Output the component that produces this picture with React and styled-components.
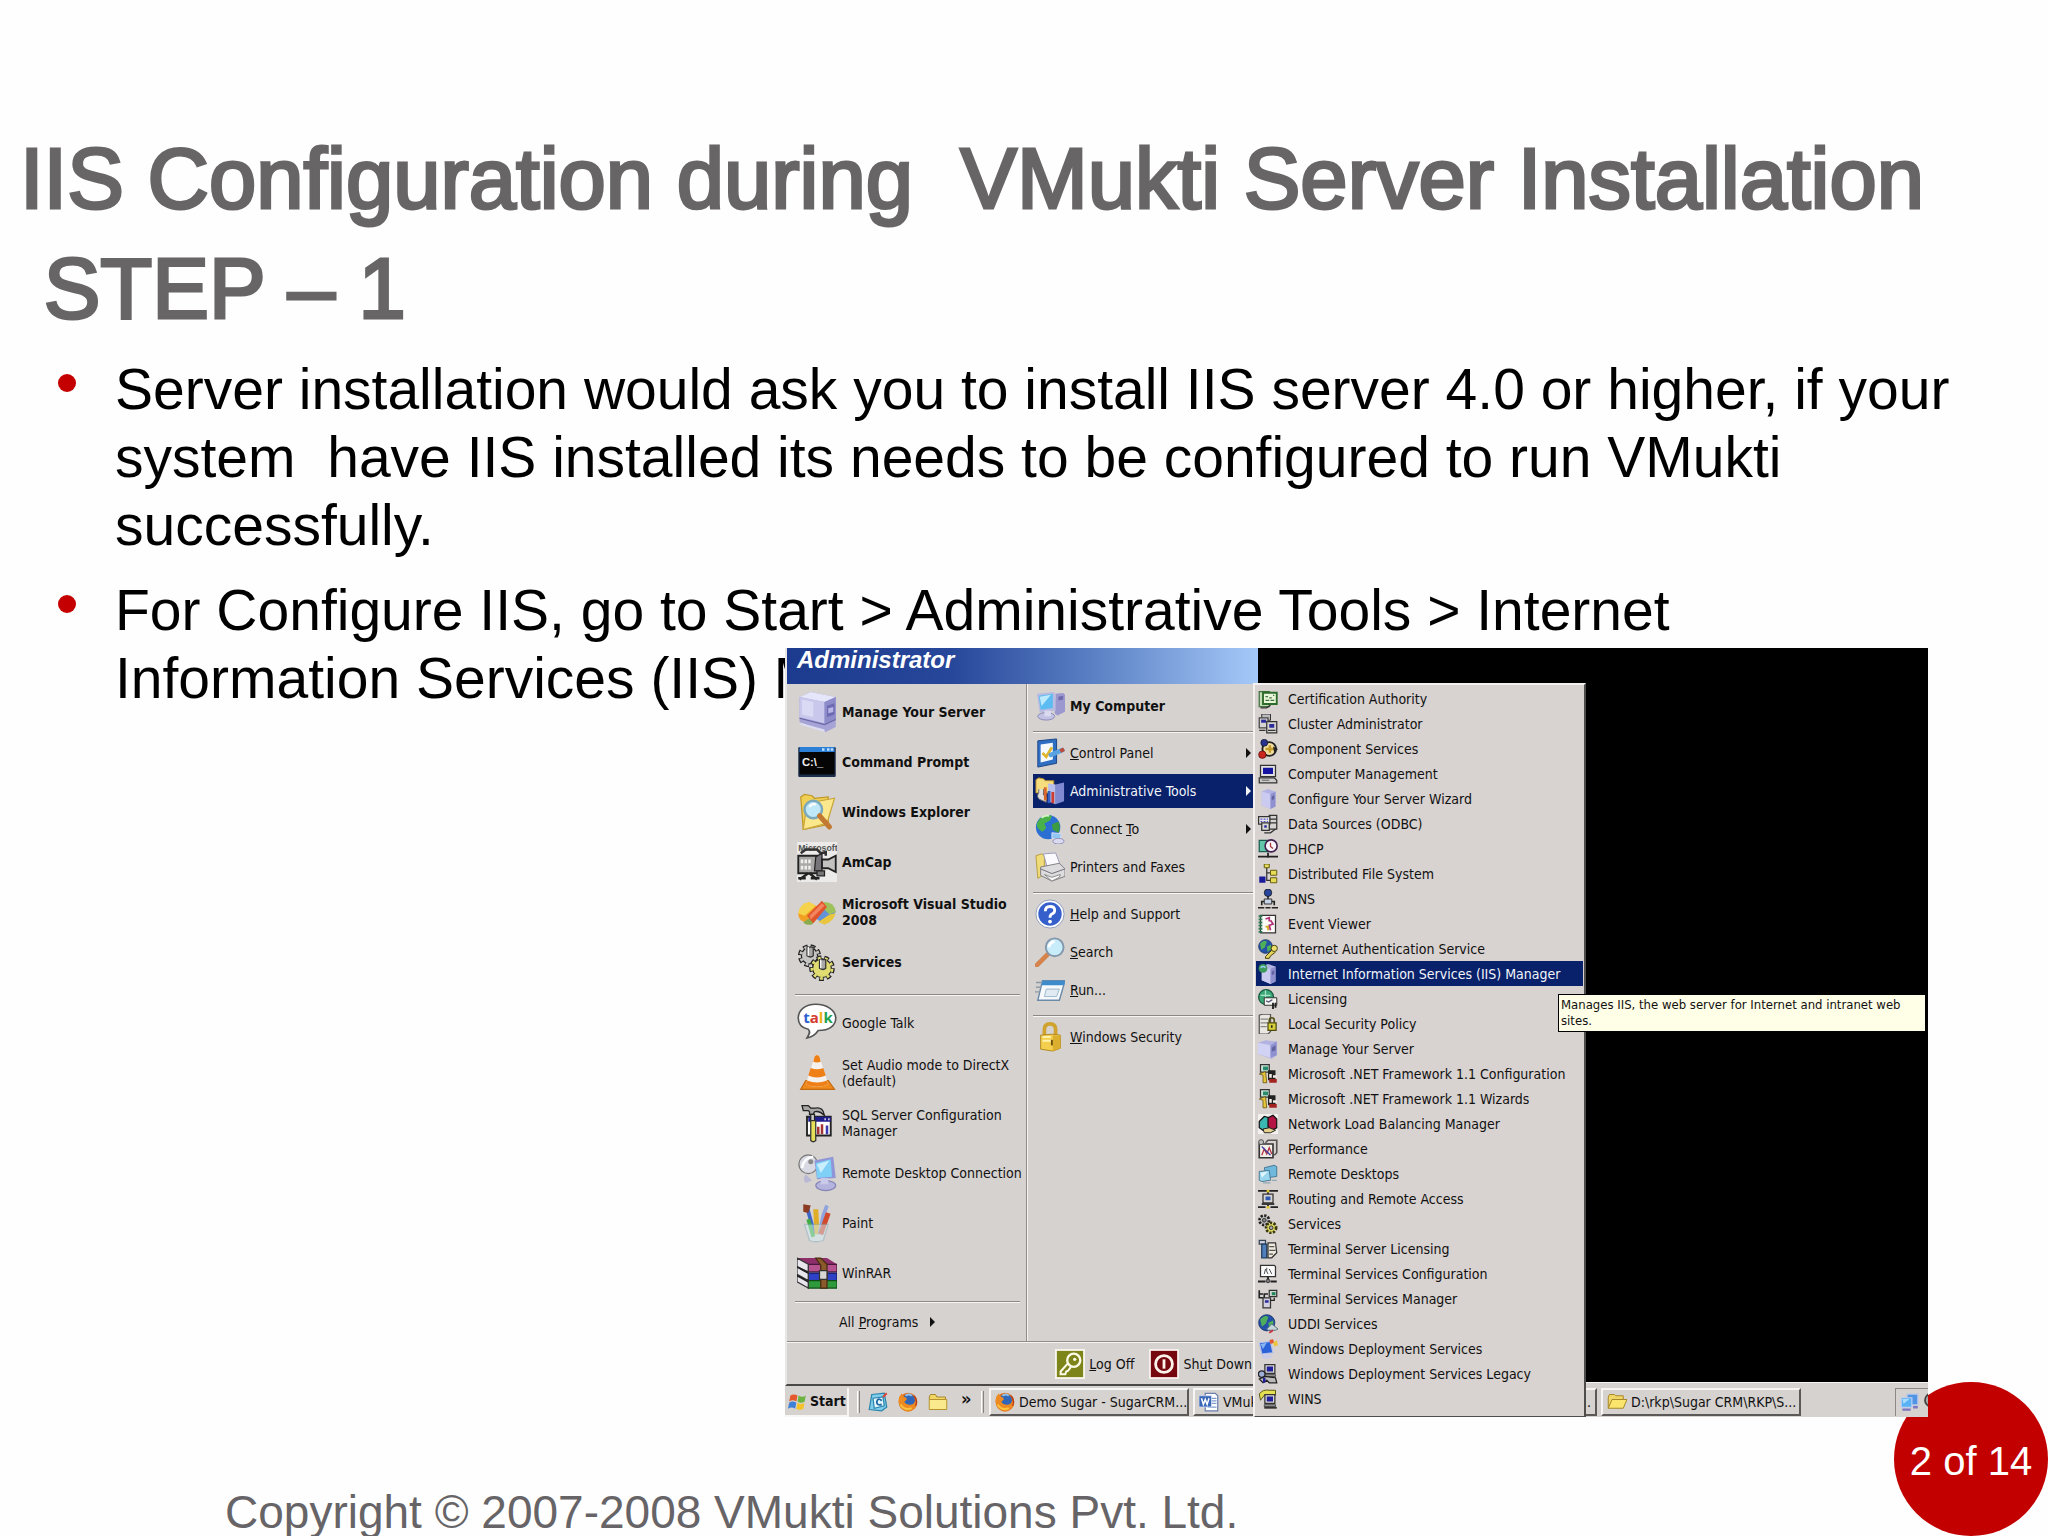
import styled, { createGlobalStyle, css } from "styled-components"

const GlobalStyle = createGlobalStyle`
    * {
        box-sizing: border-box;
    }

    body {
        margin: 0;
        background: #fefefe;
        font-family: "Liberation Sans", Arial, sans-serif;
    }

    button {
        margin: 0;
        padding: 0;
        border: 0;
        background: none;
        color: inherit;
        font: inherit;
        text-align: left;
    }
`

const Slide = styled.main`
    position: relative;
    min-height: 100vh;
    padding-top: 124px;
    overflow: hidden;
`

const Title = styled.h1`
    margin: 0 20px 11px;
    color: #686566;
    font-size: 85px;
    font-weight: 400;
    line-height: 110px;
    white-space: pre-wrap;
    -webkit-text-stroke: 3px #686566;
`

const Points = styled.ul`
    display: flex;
    flex-direction: column;
    gap: 17px;
    margin: 0;
    padding: 0 88px 0 58px;
    list-style: none;
`

const Point = styled.li`
    display: flex;
    gap: 39px;
    color: #000;
    font-size: 57px;
    line-height: 68px;
    white-space: pre-wrap;

    &::before {
        content: "";
        flex: none;
        width: 18px;
        height: 18px;
        margin-top: 19px;
        border-radius: 50%;
        background: #c40000;
    }
`

const Footer = styled.footer`
    margin: 72px 0 0 225px;
    color: #676468;
    font-size: 46px;
    line-height: 46px;
`

const PageBadge = styled.div`
    position: absolute;
    right: 0;
    bottom: 0;
    display: flex;
    align-items: center;
    justify-content: center;
    width: 154px;
    height: 154px;
    padding-top: 4px;
    border-radius: 50%;
    background: #c20000;
    color: #fff;
    font-size: 40px;
`

const Desktop = styled.section`
    position: relative;
    z-index: 1;
    margin: -64px 120px 0 785px;
    overflow: hidden;
    background: #000;
    color: #111;
    font-family: "DejaVu Sans Condensed", "DejaVu Sans", sans-serif;
    font-size: 14px;
    line-height: 16px;
`

const StartMenu = styled.nav`
    position: relative;
    z-index: 1;
    width: 473px;
    border-left: 2px solid #e9e7e5;
    border-bottom: 2px solid #4b4948;
    background: #d6d2cf;
`

const UserName = styled.div`
    height: 36px;
    padding: 0 10px;
    background: linear-gradient(90deg, #1d3b8e 0%, #27479a 35%, #5b80c4 65%, #a5c9f8 100%);
    color: #fff;
    font-family: "Liberation Sans", Arial, sans-serif;
    font-size: 24px;
    font-style: italic;
    font-weight: 700;
    line-height: 24px;
`

const MenuColumns = styled.div`
    display: flex;
    height: 658px;
    border-bottom: 1px solid #8f8c8a;
`

const ProgramColumn = styled.div`
    display: flex;
    flex-direction: column;
    width: 240px;
    padding: 3px 0 0 8px;
    border-right: 1px solid #8f8c8a;

    hr {
        width: 225px;
    }
`

const PlaceColumn = styled.div`
    flex: 1;
    padding: 3px 5px 0 5px;
    border-left: 1px solid #f6f4f2;
`

const PlaceGroup = styled.div`
    display: flex;
    flex-direction: column;
`

const Rule = styled.hr`
    flex: none;
    width: 100%;
    height: 2px;
    margin: ${({ $space }) => $space};
    border: 0;
    border-top: 1px solid #8b8886;
    background: #f8f6f4;
`

const Program = styled.button`
    display: flex;
    align-items: center;
    gap: 5px;
    height: 50px;
    padding-left: 2px;
    font-weight: ${({ $bold }) => ($bold ? 700 : 400)};

    svg {
        flex: none;
        width: 40px;
        height: 40px;
    }
`

const AllPrograms = styled.button`
    display: flex;
    align-items: center;
    gap: 12px;
    height: 38px;
    padding-left: 44px;
`

const Place = styled.button`
    display: flex;
    align-items: center;
    gap: 5px;
    width: 100%;
    height: 34px;
    margin: 2px 0;
    padding: 0 2px;
    font-weight: ${({ $bold }) => ($bold ? 700 : 400)};
    ${({ $active }) => $active && css`
        background: #08216a;
        color: #f2f4fa;
    `}

    svg {
        flex: none;
        width: 30px;
        height: 30px;
    }

    span {
        flex: 1;
    }
`

const Arrow = styled.i`
    width: 0;
    height: 0;
    border: solid transparent;
    border-width: 5px 0 5px 5px;
    border-left-color: currentColor;
`

const SessionBar = styled.div`
    display: flex;
    align-items: center;
    justify-content: flex-end;
    gap: 15px;
    height: 42px;
    padding-right: 6px;
    border-top: 1px solid #f6f4f2;
`

const SessionButton = styled.button`
    display: flex;
    align-items: center;
    gap: 4px;

    svg {
        width: 30px;
        height: 30px;
    }
`

const SubMenu = styled.nav`
    position: absolute;
    top: 35px;
    left: 468px;
    z-index: 2;
    width: 333px;
    padding: 1px 1px 5px;
    border: 2px solid #f4f2f0;
    border-right-color: #4f4d4c;
    border-bottom-color: #4f4d4c;
    background: #d8d3d0;
`

const Tool = styled.button`
    display: flex;
    align-items: center;
    gap: 10px;
    width: 100%;
    height: 25px;
    padding-left: 2px;
    ${({ $active }) => $active && css`
        background: #08216a;
        color: #f2f4fa;
    `}

    svg {
        flex: none;
        width: 20px;
        height: 20px;
    }
`

const Tooltip = styled.div`
    position: absolute;
    top: 346px;
    left: 773px;
    z-index: 3;
    width: 368px;
    padding: 2px;
    border: 1px solid #000;
    background: #fffee6;
    font-size: 13px;
`

const Taskbar = styled.div`
    display: flex;
    align-items: center;
    height: 35px;
    margin-top: -4px;
    padding-top: 4px;
    border-top: 1px solid #f6f4f2;
    background: #d6d2cf;
`

const StartButton = styled.button`
    display: flex;
    align-items: center;
    gap: 3px;
    width: 64px;
    height: 29px;
    padding-left: 3px;
    border-right: 2px solid #f8f6f4;
    border-bottom: 2px solid #f8f6f4;
    font-weight: 700;

    svg {
        width: 19px;
        height: 19px;
    }
`

const Grip = styled.i`
    width: 3px;
    height: 22px;
    margin-left: 8px;
    border-left: 1px solid #fff;
    border-right: 1px solid #85827f;
`

const QuickLaunch = styled.div`
    display: flex;
    align-items: center;
    gap: 10px;
    width: 113px;
    padding-left: 8px;

    svg {
        width: 20px;
        height: 20px;
    }

    button {
        height: 20px;
    }
`

const More = styled.button`
    margin: 0 0 6px 3px;
    font-weight: 700;
    font-size: 18px;
`

const Tasks = styled.div`
    display: flex;
    gap: 4px;
    margin: 0 94px 0 5px;
`

const TaskButton = styled.button`
    display: flex;
    align-items: center;
    gap: 4px;
    width: 200px;
    height: 28px;
    padding: 0 4px;
    border: 2px solid #f8f6f4;
    border-right-color: #5b5957;
    border-bottom-color: #5b5957;
    white-space: nowrap;

    svg {
        flex: none;
        width: 20px;
        height: 20px;
    }

    span {
        flex: 1;
        text-align: ${({ $end }) => ($end ? "right" : "left")};
    }
`

const Tray = styled.div`
    display: flex;
    align-items: center;
    flex: 1;
    gap: 3px;
    height: 28px;
    padding-left: 4px;
    overflow: hidden;
    border-top: 1px solid #8b8886;
    border-left: 1px solid #8b8886;

    svg {
        flex: none;
        width: 19px;
        height: 19px;
    }
`

// "&" marks the letter that is underlined as the access key
function Label({ children }) {
    const [before, after] = children.split("&")
    if (after === undefined) return <span>{children}</span>
    return <span>{before}<u>{after[0]}</u>{after.slice(1)}</span>
}

const Big = ({ children }) => <svg viewBox="0 0 32 32" aria-hidden="true">{children}</svg>
const Small = ({ children }) => <svg viewBox="0 0 16 16" aria-hidden="true">{children}</svg>

/* ---- large icons ---- */

const ServerIcon = () => (
    <Big>
        <path d="M2 4 11 0l20 4v24l-8 4L2 24z" fill="#a6a3d6" />
        <path d="M2 4 11 0l20 4-9 4z" fill="#e6e6fb" />
        <path d="M2 4l20 4v17L2 20z" fill="#c9c8ec" />
        <path d="M4 6l9 2v12l-9-2z" fill="#dfdff6" opacity=".8" />
        <path d="M22 8l9-4v18l-9 3z" fill="#8d8bc9" />
        <path d="M24 11l6-2v9l-6 2z" fill="#6c6ab2" />
        <path d="M25 13l4-1v4l-4 1z" fill="#b7b6e6" />
        <path d="M2 21l20 5 9-4" fill="none" stroke="#6866a5" />
        <path d="M4 25l18 5v2L2 26z" fill="#dcdcf3" />
    </Big>
)

const PromptIcon = () => (
    <Big>
        <rect x="1" y="4" width="30" height="24" rx="1" fill="#1c2e4d" />
        <rect x="2" y="4" width="28" height="4" fill="#2b7fd6" />
        <path d="M20 6h2m2 0h2m1 0h2" stroke="#bfe0ff" strokeWidth="2" />
        <rect x="2" y="8" width="28" height="18" fill="#050505" />
        <text x="4" y="19" fill="#eee" fontSize="9" fontWeight="700" fontFamily="Liberation Sans, sans-serif">C:\_</text>
    </Big>
)

const ExplorerIcon = () => (
    <Big>
        <path d="M3 4l3-2 6 1 2 2 11-1v22L5 30z" fill="#f0cf55" stroke="#c09a28" />
        <path d="M8 9l22-4-6 20-19 5z" fill="#fbe88c" stroke="#c9a53a" />
        <circle cx="13" cy="14" r="7" fill="#bfe8f8" stroke="#7da9bd" strokeWidth="2" />
        <path d="M10 12a4 4 0 0 1 5-2" stroke="#fff" strokeWidth="2" fill="none" />
        <path d="M18 19l8 9" stroke="#c27a33" strokeWidth="4" strokeLinecap="round" />
    </Big>
)

const CameraIcon = () => (
    <Big>
        <path d="M0 0h32v32H0z" fill="#ecebea" />
        <text x="1" y="7" fill="#555" fontSize="7" fontFamily="Liberation Sans, sans-serif">Microsoft</text>
        <path d="M3 9l4-3h9l3 3 4-1v3" fill="none" stroke="#333" strokeWidth="2" />
        <path d="M1 11h18v14H1z" fill="#aaa8a6" stroke="#222" strokeWidth="1.5" />
        <path d="M4 14v8m3-8v8m3-8v8" stroke="#eee" strokeDasharray="3 2" strokeWidth="2" />
        <path d="M15 12l5-3v14h-6z" fill="#77757a" stroke="#222" />
        <path d="M20 14h5l6-3v13l-6-3h-5z" fill="#c4c2c0" stroke="#222" strokeWidth="1.5" />
        <path d="M9 25l-7 5m8-5 6 5M1 29h6M11 29h7" stroke="#222" strokeWidth="2" />
        <path d="M16 23h6v4h-6z" fill="#777" stroke="#222" />
    </Big>
)

const VisualStudioIcon = () => (
    <Big>
        <path d="M1 17 9 8l8 4-9 12q-7 0-7-7z" fill="#f2a024" />
        <path d="M1 17q1-8 9-9l5 3-9 8z" fill="#f5d34b" />
        <path d="M5 24l5-3 7-1-5 6q-5 1-7-2z" fill="#8cab4d" />
        <path d="M17 11q10-6 14 5l-9 10-7-5z" fill="#6293d8" />
        <path d="M22 8q8 0 9 8l-5 2-7-7z" fill="#9dc25c" />
        <path d="M17 24l5 2q7-2 9-9l-5 1z" fill="#e9c63e" />
        <path d="M8 19 20 7l4 5-11 13z" fill="#e2542b" />
        <path d="M10 19 20 9l2 2-11 11z" fill="#f2855e" />
    </Big>
)

const Cog = ({ x, y, r, fill }) => (
    <g>
        <circle cx={x} cy={y} r={r} fill="none" stroke="#222" strokeWidth="4.5" strokeDasharray="3.4 2.2" />
        <circle cx={x} cy={y} r={r - 0.5} fill={fill} stroke="#222" />
        <circle cx={x} cy={y} r={r} fill="none" stroke={fill} strokeWidth="2.4" strokeDasharray="2.2 3.4" strokeDashoffset="-.6" />
        <path d={`M${x - 2} ${y}v-7h5v7q-2 2-5 0z`} fill="#aaa8a6" stroke="#333" />
        <path d={`M${x - 1} ${y - 7}v7`} stroke="#fff" />
    </g>
)

const GearsIcon = () => (
    <Big>
        <Cog x={10} y={11} r={7} fill="#c7c5c3" />
        <Cog x={20} y={21} r={8} fill="#e1dc72" />
    </Big>
)

const TalkIcon = () => (
    <Big>
        <path d="M15 1C6 1 1 6 1 12c0 5 3 8 8 9 2 2 1 4-1 7 5-1 7-3 9-6 9 0 14-4 14-10S24 1 15 1z" fill="#fff" stroke="#555" strokeWidth="1.3" />
        <text x="5" y="16" fontSize="12" fontWeight="700" fontFamily="Open Sans, sans-serif">
            <tspan fill="#2d5fd0">t</tspan>
            <tspan fill="#d63a2f">a</tspan>
            <tspan fill="#eeb211">l</tspan>
            <tspan fill="#1fa14b">k</tspan>
        </text>
    </Big>
)

const ConeIcon = () => (
    <Big>
        <path d="M3 29l4-7h18l5 7z" fill="#f08a1c" stroke="#c46a10" />
        <path d="M14 3q2-3 4 0l7 22q-9 4-18 0z" fill="#f4f1ee" />
        <path d="M14 3q2-3 4 0l1 4q-3 1-6 0zM11 12q5 2 10 0l2 6q-7 3-14 0z" fill="#ef7f17" />
        <path d="M7 25q9 4 18 0l-1-3q-8 3-16 0z" fill="#ef7f17" />
    </Big>
)

const SqlIcon = () => (
    <Big>
        <path d="M8 11h19v15H8z" fill="#fff" stroke="#222" strokeWidth="1.5" />
        <path d="M9 11h18v4H9z" fill="#221d8c" />
        <path d="M22 13h1m2 0h1" stroke="#fff" strokeWidth="1.5" />
        <path d="M17 25v-6m3 6v-8" stroke="#a33434" strokeWidth="2" />
        <path d="M24 25v-7" stroke="#3a3ab0" strokeWidth="2" />
        <path d="M4 2h5l2 2h4q6-1 7 6-4-4-8-3l-1 2h-3V7L9 6H5z" fill="#a9a7a5" stroke="#222" />
        <path d="M11 9h3v5h-3z" fill="#ccc" stroke="#222" />
        <path d="M11 14h4v16q-2 2-4 0z" fill="#e6e158" stroke="#333" />
    </Big>
)

const RemoteIcon = () => (
    <Big>
        <circle cx="9" cy="9" r="7.5" fill="#d9d9e4" stroke="#777" />
        <path d="M4 12q1-8 9-9" stroke="#fff" strokeWidth="2" fill="none" />
        <circle cx="11" cy="7" r="2" fill="#888" />
        <path d="M7 17l5 5-5 2q-3-3 0-7z" fill="#b9b9d6" />
        <path d="M14 6l15-3 2 17-15 1z" fill="#8f95d6" />
        <path d="M15 8l12-3 1 14-12 1z" fill="#7fd0f7" />
        <path d="M16 9l10-3-7 10z" fill="#c9effd" />
        <ellipse cx="23" cy="26" rx="8" ry="4" fill="#b4b4de" stroke="#8484b5" />
        <path d="M19 20h6v5h-6z" fill="#c9c9ea" />
    </Big>
)

const PaintIcon = () => (
    <Big>
        <path d="M8 3l6 22" stroke="#3f66c9" strokeWidth="3" />
        <path d="M5 1l6 1-2 6-4-1z" fill="#8b3c22" />
        <path d="M15 5l1 20" stroke="#e0ad28" strokeWidth="4" />
        <path d="M24 2l-3 8-3 15" stroke="#8fa4dd" strokeWidth="3" fill="none" />
        <path d="M25 8l-6 17" stroke="#d2482b" strokeWidth="4" />
        <path d="M9 13l4 14" stroke="#3eac3e" strokeWidth="3" />
        <path d="M6 17h19l-4 13q-6 2-11 0z" fill="#d4eef6" opacity=".5" stroke="#8cb3c0" />
    </Big>
)

const RarIcon = () => (
    <Big>
        <path d="M0 4h24l8 5v3H9z" fill="#8e2f6b" />
        <path d="M9 9h23v6H9z" fill="#b5528f" stroke="#4a153a" />
        <path d="M9 16h23v6H9z" fill="#2d40c6" stroke="#131b63" />
        <path d="M9 22h23v6H9z" fill="#2f9a3b" stroke="#0f4d18" />
        <path d="M0 4l9 5v6l-9-4zM0 11l9 5v6l-9-5zM0 18l9 4v6l-9-5z" fill="#e9e6ee" stroke="#333" />
        <path d="M0 11l9 5M0 18l9 5" stroke="#222" strokeWidth="1.5" />
        <path d="M15 4h4l5 5v19h-5V10z" fill="#8b5a2b" stroke="#4a2c10" />
        <path d="M18 14h6v7h-6z" fill="#d8d6d4" stroke="#333" />
    </Big>
)

const ComputerIcon = () => (
    <Big>
        <path d="M22 3l8-1 2 2v18l-8 4-3-2z" fill="#9b98cf" />
        <path d="M25 6l5-1v4l-5 1z" fill="#6d6aad" />
        <path d="M2 3l17-2 3 2v18L5 23z" fill="#b9bbe0" />
        <path d="M4 5l15-2v15L6 20z" fill="#5cbcf2" />
        <path d="M5 6l12-2L7 16z" fill="#bdeafd" />
        <ellipse cx="12" cy="27" rx="9" ry="4" fill="#c2c3e2" stroke="#8788b8" />
        <path d="M10 21h7v6h-7z" fill="#d9daf0" />
    </Big>
)

const ControlPanelIcon = () => (
    <Big>
        <path d="M3 3l20-2v26L3 31z" fill="#2e6fc4" stroke="#1b4280" />
        <path d="M6 7l13-2v18L6 26z" fill="#f7fafd" />
        <path d="M8 16l4 4 6-10" stroke="#dfb62c" strokeWidth="3" fill="none" />
        <path d="M17 18l12-5" stroke="#5aa3e0" strokeWidth="5" strokeLinecap="round" />
        <path d="M27 14l4-2" stroke="#c04a3a" strokeWidth="4" />
    </Big>
)

const AdminToolsIcon = () => (
    <Big>
        <path d="M1 4l3-2 5 1 2 2h9v13H1z" fill="#f5dc7d" stroke="#b98f2b" />
        <path d="M22 9l9-2v20l-9 3z" fill="#7f8ad2" />
        <path d="M14 8l8 1v21l-8-3z" fill="#b9bfec" />
        <path d="M4 14v4q-3 4 1 7l7 3v-5l-3-3v-6" fill="#e0e0e0" stroke="#666" />
        <path d="M11 12v14" stroke="#d8672c" strokeWidth="3" />
        <path d="M15 16v13" stroke="#3560c0" strokeWidth="3" />
        <path d="M19 17v12" stroke="#cc3c33" strokeWidth="3" />
    </Big>
)

const ConnectIcon = () => (
    <Big>
        <circle cx="14" cy="14" r="13" fill="#2b6fd3" />
        <path d="M5 5q7-5 13-3l-2 5-6 3 2 5-4 4q-7-4-6-9z" fill="#49b14a" />
        <path d="M18 11l7-3q3 6 0 12l-6-3z" fill="#3c9a40" />
        <path d="M7 4q4-3 8-2" stroke="#d8f3c4" strokeWidth="2" fill="none" />
        <path d="M18 20l10 1-1 6-9-1z" fill="#8fc7f2" stroke="#dcdcf4" />
        <ellipse cx="25" cy="29" rx="6" ry="3" fill="#dadaee" stroke="#8c8cb9" />
    </Big>
)

const PrinterIcon = () => (
    <Big>
        <path d="M1 4l6-2 3 2v20l-7 4z" fill="#efdc78" stroke="#b69c3e" />
        <path d="M9 2l13-1 5 13-14 2z" fill="#fafaff" stroke="#9a9abb" />
        <path d="M6 16l20-4 6 6v8l-14 5-12-6z" fill="#dcdbdd" stroke="#7d7b80" />
        <path d="M6 18l12 5 14-5" fill="none" stroke="#6d6b70" />
        <path d="M10 24l8 3 9-3-1 3-8 4z" fill="#f9f9f9" stroke="#888" />
    </Big>
)

const HelpIcon = () => (
    <Big>
        <circle cx="16" cy="16" r="15" fill="#fff" stroke="#8b99b8" />
        <circle cx="16" cy="16" r="12.5" fill="#3560cc" />
        <path d="M11 13q0-5 5-5t5 4q0 3-3 4-2 1-2 4" fill="none" stroke="#fff" strokeWidth="3" />
        <circle cx="16" cy="24" r="2" fill="#fff" />
    </Big>
)

const SearchIcon = () => (
    <Big>
        <path d="M2 30l11-11" stroke="#d3834b" strokeWidth="5" strokeLinecap="round" />
        <circle cx="21" cy="11" r="9.5" fill="#c9ecfa" stroke="#8297ad" strokeWidth="2" />
        <path d="M15 11a6 6 0 0 1 6-6" stroke="#fff" strokeWidth="3" fill="none" />
    </Big>
)

const RunIcon = () => (
    <Big>
        <path d="M8 6h24l-6 21H3z" fill="#f6fafd" stroke="#6b8aa9" strokeWidth="1.5" />
        <path d="M8 6h24l-1 5H7z" fill="#3f8ccc" />
        <path d="M12 15h14l-3 8H10z" fill="#dfeaf2" stroke="#9db6c8" />
        <path d="M1 8h6M1 13h5M0 18h5" stroke="#8d9aa6" strokeWidth="1.5" />
    </Big>
)

const LockIcon = () => (
    <Big>
        <path d="M10 14V8q0-6 6-6t6 6v6" fill="none" stroke="#cfa32d" strokeWidth="4" />
        <path d="M6 14l13-1 8 1v14l-8 3-13-2z" fill="#f4cf4d" stroke="#af861f" />
        <path d="M19 14l8 1v13l-8 3z" fill="#dcae2d" />
        <path d="M8 16h9M8 20h9" stroke="#fff2a9" strokeWidth="2" />
        <path d="M18 19v6" stroke="#6d4f0e" strokeWidth="2" />
    </Big>
)

const LogOffIcon = () => (
    <Big>
        <rect x="1" y="1" width="30" height="30" fill="#7d8419" stroke="#f7f6ee" strokeWidth="2" />
        <circle cx="20" cy="12" r="7" fill="none" stroke="#fbfae6" strokeWidth="2.5" />
        <circle cx="21" cy="11" r="1.8" fill="#fbfae6" />
        <path d="M14 15l-8 9v3h5l1-3 2-1 3-4" fill="none" stroke="#fbfae6" strokeWidth="2.2" />
    </Big>
)

const ShutDownIcon = () => (
    <Big>
        <rect x="1" y="1" width="30" height="30" fill="#77070f" stroke="#f7f0ee" strokeWidth="2" />
        <circle cx="16" cy="16" r="9" fill="none" stroke="#fbf2e9" strokeWidth="3" />
        <path d="M16 11v10" stroke="#fbf2e9" strokeWidth="3" />
    </Big>
)

/* ---- small icons ---- */

const Pc = ({ x = 0, y = 0, screen = "#20209c" }) => (
    <g transform={`translate(${x} ${y})`}>
        <path d="M.5.5h8v7h-8z" fill="#d9d7d5" stroke="#333" />
        <path d="M2 2h5v4H2z" fill={screen} />
        <path d="M0 8.500h9v1.500H0z" fill="#999" stroke="#333" strokeWidth=".6" />
    </g>
)

const Globe = ({ x = 7, y = 7, r = 6 }) => (
    <g>
        <circle cx={x} cy={y} r={r} fill="#2450a8" stroke="#163063" strokeWidth=".6" />
        <path d={`M${x - r * .8} ${y - r * .4}q${r * .6} ${-r * .7} ${r} ${-r * .3}l${-r * .3} ${r * .8}-${r * .5} ${r * .4}z`} fill="#4fae5a" />
        <path d={`M${x + r * .2} ${y}l${r * .6}-${r * .3} 0 ${r * .7}-${r * .5} ${r * .4}z`} fill="#4fae5a" />
    </g>
)

const Tower = () => (
    <>
        <path d="M3 2l5-2 6 2v12l-4 2-7-3z" fill="#b3b3e3" />
        <path d="M3 2l7 2v12l-7-3z" fill="#cbcbf2" />
        <path d="M10 4l4-2v12l-4 2z" fill="#8f90cf" />
        <path d="M11 6l2-1v3l-2 1z" fill="#62639f" />
    </>
)

const Key = () => (
    <>
        <path d="M12 8l-6 6v1.500h3l1-2 4-3" fill="#e3d45c" stroke="#4a4210" strokeWidth=".8" />
        <circle cx="13" cy="7.500" r="2.500" fill="#ecdf6c" stroke="#4a4210" strokeWidth=".8" />
    </>
)

const CertIcon = () => (
    <Small>
        <path d="M1 2h8v12H1z" fill="#c3dcb8" stroke="#41713c" />
        <path d="M4 3h11v9H4z" fill="#e8f5d8" stroke="#2d6b2a" strokeWidth="1.5" />
        <path d="M6 6h2m1 1h2m1-2h1M6 9h3m1 0h3" stroke="#41713c" />
        <path d="M2 15h5l3-2" stroke="#333" fill="none" />
    </Small>
)

const ClusterIcon = () => (
    <Small>
        <path d="M3 0h7v5H3z" fill="#bbb" stroke="#333" strokeWidth=".8" />
        <path d="M1 3h7v8H1z" fill="#d6d4d2" stroke="#444" />
        <path d="M2.500 4.500h4V7h-4z" fill="#2b2b9c" />
        <path d="M7 6h8v9H7z" fill="#d6d4d2" stroke="#333" />
        <path d="M9 8h4v3H9z" fill="#2b2b9c" />
        <path d="M1 13h5M8 13h6" stroke="#333" />
    </Small>
)

const ComponentIcon = () => (
    <Small>
        <circle cx="9" cy="8" r="5.500" fill="#f1dfa2" stroke="#222" strokeWidth="1.500" />
        <path d="M6 8h7M9.500 5v6" stroke="#c59b2b" strokeWidth="2" />
        <circle cx="5" cy="3" r="2.800" fill="#27338f" stroke="#111" strokeWidth=".5" />
        <circle cx="3.500" cy="12.500" r="3" fill="#c8251c" stroke="#400" strokeWidth=".5" />
        <path d="M12 6l4 2-3 3z" fill="#222" />
    </Small>
)

const ManagementIcon = () => (
    <Small>
        <path d="M2 1h12v9H2z" fill="#e3e1df" stroke="#333" />
        <path d="M4 3h8v5H4z" fill="#1414a0" />
        <path d="M1 11h12l2 2v2H1z" fill="#cfcdca" stroke="#333" />
        <path d="M3 13h6" stroke="#777" />
    </Small>
)

const TowerIcon = () => <Small><Tower /></Small>

const ServerBoxIcon = () => (
    <Small>
        <path d="M0 3l6-2 9 1v11l-4 3-11-4z" fill="#b3b3e3" />
        <path d="M0 3l10 2v10L0 12z" fill="#d2d2f4" />
        <path d="M10 5l5-3v11l-5 2z" fill="#8f90cf" />
        <path d="M11 7l3-2v4l-3 1z" fill="#62639f" />
    </Small>
)

const OdbcIcon = () => (
    <Small>
        <path d="M9 1h6v11H9z" fill="#d6d4d2" stroke="#333" />
        <path d="M9 4h6M9 7h6" stroke="#333" />
        <path d="M.500 2h9v6h-9z" fill="#e9e7e5" stroke="#333" />
        <path d="M2 4h6M2 6h6" stroke="#55c" strokeDasharray="1.500 1" />
        <path d="M3 7h6v6H3z" fill="#dcdad8" stroke="#333" />
        <path d="M5 9h2v2H5z" fill="#2b2b9c" />
        <path d="M5 15h5l4-3" stroke="#333" fill="none" />
    </Small>
)

const DhcpIcon = () => (
    <Small>
        <path d="M1 1h7v9H1z" fill="#61c7a8" stroke="#1b5c51" />
        <circle cx="10.500" cy="5.500" r="4.800" fill="#f8f4fb" stroke="#43204f" strokeWidth="1.300" />
        <path d="M10 3v3l2 1.500" stroke="#a33" fill="none" />
        <path d="M0 14h16M8 11v4" stroke="#222" strokeWidth="1.400" />
    </Small>
)

const DfsIcon = () => (
    <Small>
        <path d="M7 3v10h4M7 7h4" fill="none" stroke="#333" />
        <path d="M5 0h4v3H5zM10 5h5v4h-5zM10 11h5v4h-5z" fill="#e6dc55" stroke="#665d14" strokeWidth=".8" />
        <path d="M1 10h5v5H1z" fill="#1a1a9a" />
    </Small>
)

const DnsIcon = () => (
    <Small>
        <path d="M8 5v4M3 13v-3h10v3M0 15h5m1 0h4m1 0h5" fill="none" stroke="#222" strokeWidth="1.300" />
        <path d="M5 8h6v4H5z" fill="#c9d3e8" stroke="#333" strokeWidth=".8" />
        <circle cx="8" cy="3" r="3" fill="#27459c" stroke="#111" strokeWidth=".6" />
    </Small>
)

const EventIcon = () => (
    <Small>
        <path d="M2 1h12v14H2z" fill="#fbfbf9" stroke="#333" />
        <path d="M2 1v14" stroke="#2c7a53" strokeWidth="3" strokeDasharray="1.500 1" />
        <path d="M6 4l3-1v3M10 5l2 3-3 1 1 4" stroke="#b0307a" strokeWidth="1.400" fill="none" />
        <path d="M6 10h2v3" stroke="#d0a81d" strokeWidth="1.400" fill="none" />
    </Small>
)

const AuthIcon = () => <Small><Globe x={6} y={6} r={5.5} /><Key /></Small>

const IisIcon = () => <Small><Tower /><circle cx="4" cy="3.500" r="3.500" fill="#3e9a5b" /><path d="M2 3q2-2 4 0" stroke="#9ed0f7" fill="none" /></Small>

const LicenseIcon = () => (
    <Small>
        <circle cx="6.500" cy="6.500" r="6" fill="#3ba876" stroke="#17573f" />
        <path d="M2 5h8M6 1v10" stroke="#a8e2c6" />
        <path d="M5 7h10v6H5z" fill="#f6f6f3" stroke="#333" strokeWidth=".8" />
        <path d="M6.500 9.500l2 1 3-2" stroke="#557" fill="none" />
        <path d="M12 11v5m2-5v4" stroke="#222" strokeWidth="1.500" />
    </Small>
)

const PolicyIcon = () => (
    <Small>
        <path d="M1 1l3-1h6v14l-2 2H1z" fill="#e9e7e0" stroke="#555" />
        <path d="M2 4h6M2 7h6M2 10h5" stroke="#888" />
        <path d="M9 7V5q0-2 2-2t2 2v2" fill="none" stroke="#555016" strokeWidth="1.300" />
        <path d="M8 7h6.500v6H8z" fill="#d8d137" stroke="#4d4a10" />
        <path d="M11 9v2" stroke="#222" strokeWidth="1.300" />
    </Small>
)

const NetIcon = () => (
    <Small>
        <path d="M2 .500h7v6H2z" fill="#cfe5dc" stroke="#333" />
        <path d="M4 2h4v3H4z" fill="#2a8a6c" />
        <path d="M1 8l5-2 1 9H4V9z" fill="#e8c53b" stroke="#5e4d0c" strokeWidth=".6" />
        <path d="M8 5h6v8H8z" fill="#222" />
        <path d="M9 8h2v3H9zM12 9h3v2h-3z" fill="#f4ece6" />
        <path d="M9 12h6v3H9z" fill="#a2231f" />
    </Small>
)

const BalanceIcon = () => (
    <Small>
        <path d="M0 0h16v16H0z" fill="#f3f1ef" />
        <path d="M1 6l4-4 4 1v8l-5 2-3-2z" fill="#3ab7b0" stroke="#111" />
        <path d="M8 3l4-2 3 3v7l-4 2-3-3z" fill="#b31443" stroke="#111" />
        <path d="M4 12l5-1 5 2-4 2H5z" fill="#e6d08d" stroke="#222" strokeWidth=".8" />
    </Small>
)

const PerformanceIcon = () => (
    <Small>
        <path d="M1 4h11v11H1z" fill="#f3efe9" stroke="#333" strokeWidth="1.300" />
        <path d="M3 13l2-5 2 4 2-5 2 5" stroke="#b0303c" fill="none" />
        <path d="M3 6l7 7" stroke="#3a3aa0" />
        <path d="M6 3l2-2h7v10l-2 2" fill="none" stroke="#555" strokeWidth="1.300" />
        <circle cx="2.500" cy="2.500" r="2" fill="#bbb" stroke="#444" strokeWidth=".7" />
    </Small>
)

const DesktopsIcon = () => (
    <Small>
        <path d="M5 3l8-2 2 1v8l-8 1z" fill="#6fb9dd" stroke="#3d708c" strokeWidth=".7" />
        <path d="M1 6l8-1 1 8-7 1-2-1z" fill="#9ad7ee" stroke="#3d708c" strokeWidth=".7" />
        <path d="M2 7l6-1-5 5z" fill="#e0f5fc" />
        <path d="M4 15h6M11 13h4" stroke="#8fa9b5" />
    </Small>
)

const RoutingIcon = () => (
    <Small>
        <path d="M0 1.500h16M0 14.500h6m4 0h6M8 1v3M8 12v3" stroke="#222" strokeWidth="1.400" />
        <path d="M4 4h8v7H4z" fill="#d8d6d4" stroke="#333" />
        <path d="M6 6h4v3H6z" fill="#2f58b0" />
        <path d="M3 12h10" stroke="#333" strokeWidth="1.500" />
        <circle cx="8" cy="1.500" r="1.200" fill="#e1c72c" />
        <circle cx="8" cy="14.500" r="1.200" fill="#e1c72c" />
    </Small>
)

const SmallGearsIcon = () => (
    <Small>
        <circle cx="5" cy="5" r="3.800" fill="#c7c5c3" stroke="#222" strokeWidth="2.200" strokeDasharray="1.800 1.100" />
        <circle cx="5" cy="5" r="1.500" fill="#888" stroke="#222" strokeWidth=".7" />
        <circle cx="10.500" cy="11" r="4" fill="#e1dc62" stroke="#3b3810" strokeWidth="2.200" strokeDasharray="1.800 1.100" />
        <circle cx="10.500" cy="11" r="1.500" fill="#aaa" stroke="#222" strokeWidth=".7" />
    </Small>
)

const TsLicenseIcon = () => (
    <Small>
        <path d="M1 1h5v3H1z" fill="#ccd" stroke="#345" />
        <path d="M3 4h4v11H3z" fill="#4f80bd" stroke="#223a5c" />
        <path d="M8 3h6l1 8-4 4H8z" fill="#eee9dd" stroke="#333" />
        <path d="M9 6h4M9 9h5M9 12h3" stroke="#555" />
    </Small>
)

const TsConfigIcon = () => (
    <Small>
        <path d="M2 1h11l1 1v8H2z" fill="#fafafa" stroke="#333" />
        <path d="M5 8l1-4 2 4M9 4l2 4M7 3v2" stroke="#555" fill="none" strokeWidth=".8" />
        <path d="M8 10v4M0 14h6m4 0h5" stroke="#222" strokeWidth="1.500" />
        <circle cx="8" cy="13.500" r="1.500" fill="#777" stroke="#222" strokeWidth=".6" />
    </Small>
)

const TsManagerIcon = () => (
    <Small>
        <path d="M1 1v6h4V4h3M1 4h3" fill="none" stroke="#222" strokeWidth="1.300" />
        <path d="M9 1h6v5H9z" fill="#cfd8d4" stroke="#333" />
        <path d="M11 2.500h3V5h-3z" fill="#23855a" />
        <path d="M4 7h6v8H4z" fill="#d3d1df" stroke="#333" />
        <path d="M5.500 9h3v2h-3z" fill="#2b2b9c" />
        <path d="M10 9h3V7" stroke="#222" fill="none" />
    </Small>
)

const UddiIcon = () => (
    <Small>
        <Globe x={7} y={7} r={6.5} />
        <path d="M7 12l4-4 5 4-2 1H8z" fill="#c5d5da" stroke="#5c7680" strokeWidth=".8" />
        <path d="M9 15l3-2" stroke="#c34" strokeWidth="1.500" />
    </Small>
)

const DeployIcon = () => (
    <Small>
        <path d="M1 3l9-1 2 9-9 1z" fill="#2c62d8" stroke="#b9c3ea" />
        <path d="M2 4l5-1-3 5z" fill="#88b4f2" />
        <path d="M9 1l3-1 1 3-3 1z" fill="#e15a36" />
        <path d="M12 3l3-2 1 4-3 1z" fill="#eec43a" />
        <ellipse cx="7" cy="14" rx="4" ry="1.600" fill="#c9cbe8" />
    </Small>
)

const LegacyIcon = () => (
    <Small>
        <Pc x={5} y={0} />
        <circle cx="3" cy="8" r="2.600" fill="#9fb0d8" stroke="#222" />
        <path d="M1 12l5-2 8 1 1 4H9l-2-2-3 2z" fill="#bbb" stroke="#222" />
        <path d="M5 11v4" stroke="#22229c" strokeWidth="2" />
    </Small>
)

const WinsIcon = () => (
    <Small>
        <path d="M1 4q3-4 8-3h5v4H5l-3 4z" fill="#e3de52" stroke="#5d5a14" strokeWidth=".8" />
        <Pc x={5} y={4} />
        <path d="M5 15h10" stroke="#333" strokeWidth="1.500" />
    </Small>
)

/* ---- taskbar icons ---- */

const FlagIcon = () => (
    <Small>
        <path d="M2 3q3-2 6 0L7 8Q4 6 1 8z" fill="#e5582b" />
        <path d="M9 3q3 2 6 0l-1 5q-3 2-6 0z" fill="#6cb33f" />
        <path d="M1 9q3-2 6 0l-1 5q-3-2-6 0z" fill="#3e7fd8" />
        <path d="M8 9q3 2 6 0l-1 5q-3 2-6 0z" fill="#f4c32c" />
    </Small>
)

const MailIcon = () => (
    <Small>
        <path d="M3 2l10-1 2 11-4 3-10-1z" fill="#7fcdea" stroke="#2c86ad" />
        <path d="M4 5l8-1 1 7-8 2z" fill="#e6f7fc" stroke="#2c86ad" />
        <path d="M11 7q-3-3-4 1 0 3 4 2" stroke="#1f6aa8" strokeWidth="1.500" fill="none" />
        <path d="M12 4l3-3" stroke="#d43" strokeWidth="1.500" />
    </Small>
)

const FirefoxIcon = () => (
    <Small>
        <circle cx="8" cy="8" r="7.500" fill="#e0701d" />
        <circle cx="8.500" cy="6.500" r="5" fill="#2f66b8" />
        <path d="M6 3q3-2 5 0" stroke="#8fc4ee" strokeWidth="1.500" fill="none" />
        <path d="M.500 8Q0 4 3 1q0 2 2 3 2 0 2 2l-2 2q2 3 6 2 3-1 4-5 1 7-3 9-4 3-8 0-3-2-3.500-6z" fill="#ee8a22" />
        <path d="M2 10q3 5 9 3" stroke="#f9c440" strokeWidth="1.500" fill="none" />
        <path d="M13 3q3 4 1 8" stroke="#b93a16" fill="none" />
    </Small>
)

const FolderIcon = () => (
    <Small>
        <path d="M1 4l1-2h4l1 2h7v2H1z" fill="#f0d765" stroke="#a8882a" strokeWidth=".8" />
        <path d="M1 6h14v8H1z" fill="#fbea8d" stroke="#b8942e" strokeWidth=".8" />
    </Small>
)

const OpenFolderIcon = () => (
    <Small>
        <path d="M1 13V4l1-2h4l1 1h6v3" fill="#f0d765" stroke="#a8882a" strokeWidth=".8" />
        <path d="M1 13l3-7h12l-3 7z" fill="#fbe56d" stroke="#a8882a" strokeWidth=".8" />
    </Small>
)

const WordIcon = () => (
    <Small>
        <path d="M5 1h8l2 2v12H5z" fill="#fff" stroke="#6c7fae" />
        <path d="M9 5h5M9 7h5M9 9h5M7 12h7" stroke="#7f9bd0" />
        <path d="M0 3h10v9H0z" fill="#3a66b8" stroke="#d7e2f5" strokeWidth=".6" />
        <path d="M2 5l1.500 5L5 6l1.500 4L8 5" stroke="#fff" fill="none" strokeWidth="1.200" />
    </Small>
)

const NetworkTrayIcon = () => (
    <Small>
        <path d="M6 1h9v9H6z" fill="#4f95e4" stroke="#b7c6ea" />
        <path d="M1 4h9v8H1z" fill="#5ab2f6" stroke="#c2cdf0" />
        <path d="M2 5h6l-5 4z" fill="#a8dcfc" />
        <path d="M2 14h7M11 12h4" stroke="#7a76c4" strokeWidth="2" />
    </Small>
)

const SpeakerTrayIcon = () => (
    <Small>
        <circle cx="8" cy="6" r="5.500" fill="#aaa9a8" stroke="#444" strokeWidth="1.500" />
        <circle cx="8" cy="6" r="2" fill="#eee" stroke="#444" />
        <path d="M8 12v3" stroke="#444" strokeWidth="2" />
    </Small>
)

const pinned = [
    ["Manage Your Server", ServerIcon],
    ["Command Prompt", PromptIcon],
    ["Windows Explorer", ExplorerIcon],
    ["AmCap", CameraIcon],
    ["Microsoft Visual Studio 2008", VisualStudioIcon],
    ["Services", GearsIcon],
]

const recent = [
    ["Google Talk", TalkIcon],
    ["Set Audio mode to DirectX (default)", ConeIcon],
    ["SQL Server Configuration Manager", SqlIcon],
    ["Remote Desktop Connection", RemoteIcon],
    ["Paint", PaintIcon],
    ["WinRAR", RarIcon],
]

const placeGroups = [
    [{ label: "My Computer", Icon: ComputerIcon, bold: true }],
    [
        { label: "&Control Panel", Icon: ControlPanelIcon, arrow: true },
        { label: "Administrative Tools", Icon: AdminToolsIcon, arrow: true, active: true },
        { label: "Connect &To", Icon: ConnectIcon, arrow: true },
        { label: "Printers and Faxes", Icon: PrinterIcon },
    ],
    [
        { label: "&Help and Support", Icon: HelpIcon },
        { label: "&Search", Icon: SearchIcon },
        { label: "&Run...", Icon: RunIcon },
    ],
    [{ label: "&Windows Security", Icon: LockIcon }],
]

const tools = [
    ["Certification Authority", CertIcon],
    ["Cluster Administrator", ClusterIcon],
    ["Component Services", ComponentIcon],
    ["Computer Management", ManagementIcon],
    ["Configure Your Server Wizard", TowerIcon],
    ["Data Sources (ODBC)", OdbcIcon],
    ["DHCP", DhcpIcon],
    ["Distributed File System", DfsIcon],
    ["DNS", DnsIcon],
    ["Event Viewer", EventIcon],
    ["Internet Authentication Service", AuthIcon],
    ["Internet Information Services (IIS) Manager", IisIcon],
    ["Licensing", LicenseIcon],
    ["Local Security Policy", PolicyIcon],
    ["Manage Your Server", ServerBoxIcon],
    ["Microsoft .NET Framework 1.1 Configuration", NetIcon],
    ["Microsoft .NET Framework 1.1 Wizards", NetIcon],
    ["Network Load Balancing Manager", BalanceIcon],
    ["Performance", PerformanceIcon],
    ["Remote Desktops", DesktopsIcon],
    ["Routing and Remote Access", RoutingIcon],
    ["Services", SmallGearsIcon],
    ["Terminal Server Licensing", TsLicenseIcon],
    ["Terminal Services Configuration", TsConfigIcon],
    ["Terminal Services Manager", TsManagerIcon],
    ["UDDI Services", UddiIcon],
    ["Windows Deployment Services", DeployIcon],
    ["Windows Deployment Services Legacy", LegacyIcon],
    ["WINS", WinsIcon],
]

function Start() {
    return (
        <StartMenu aria-label="Start menu">
            <UserName>Administrator</UserName>
            <MenuColumns>
                <ProgramColumn>
                    {pinned.map(([label, Icon]) => (
                        <Program key={label} $bold><Icon /><span>{label}</span></Program>
                    ))}
                    <Rule $space="7px 0 2px" />
                    {recent.map(([label, Icon]) => (
                        <Program key={label}><Icon /><span>{label}</span></Program>
                    ))}
                    <Rule $space="3px 0 0" />
                    <AllPrograms><Label>All &Programs</Label><Arrow /></AllPrograms>
                </ProgramColumn>
                <PlaceColumn>
                    {placeGroups.map((group, i) => (
                        <PlaceGroup key={i}>
                            {i > 0 && <Rule $space="6px 0 1px" />}
                            {group.map(({ label, Icon, bold, arrow, active }) => (
                                <Place key={label} $bold={bold} $active={active}>
                                    <Icon />
                                    <Label>{label}</Label>
                                    {arrow && <Arrow />}
                                </Place>
                            ))}
                        </PlaceGroup>
                    ))}
                </PlaceColumn>
            </MenuColumns>
            <SessionBar>
                <SessionButton><LogOffIcon /><Label>&Log Off</Label></SessionButton>
                <SessionButton><ShutDownIcon /><Label>Sh&ut Down</Label></SessionButton>
            </SessionBar>
        </StartMenu>
    )
}

function TaskbarRow() {
    return (
        <Taskbar>
            <StartButton><FlagIcon />Start</StartButton>
            <Grip />
            <QuickLaunch>
                <button aria-label="Outlook Express"><MailIcon /></button>
                <button aria-label="Firefox"><FirefoxIcon /></button>
                <button aria-label="Folder"><FolderIcon /></button>
                <More>»</More>
            </QuickLaunch>
            <Grip />
            <Tasks>
                <TaskButton><FirefoxIcon /><span>Demo Sugar - SugarCRM...</span></TaskButton>
                <TaskButton><WordIcon /><span>VMukti</span></TaskButton>
                <TaskButton $end><span>...</span></TaskButton>
                <TaskButton><OpenFolderIcon /><span>D:\rkp\Sugar CRM\RKP\S...</span></TaskButton>
            </Tasks>
            <Tray><NetworkTrayIcon /><SpeakerTrayIcon /></Tray>
        </Taskbar>
    )
}

function App() {
    return (
        <>
            <GlobalStyle />
            <Slide>
                <Title>{"IIS Configuration during  VMukti Server Installation\n STEP – 1"}</Title>
                <Points>
                    <Point>{"Server installation would ask you to install IIS server 4.0 or higher, if your system  have IIS installed its needs to be configured to run VMukti successfully."}</Point>
                    <Point>{"For Configure IIS, go to Start > Administrative Tools > Internet Information Services (IIS) Manager."}</Point>
                </Points>
                <Desktop>
                    <Start />
                    <TaskbarRow />
                    <SubMenu aria-label="Administrative Tools">
                        {tools.map(([label, Icon]) => (
                            <Tool key={label} $active={label.includes("(IIS)")}><Icon />{label}</Tool>
                        ))}
                    </SubMenu>
                    <Tooltip role="tooltip">Manages IIS, the web server for Internet and intranet web sites.</Tooltip>
                </Desktop>
                <Footer>Copyright © 2007-2008 VMukti Solutions Pvt. Ltd.</Footer>
                <PageBadge>2 of 14</PageBadge>
            </Slide>
        </>
    )
}

export default App
